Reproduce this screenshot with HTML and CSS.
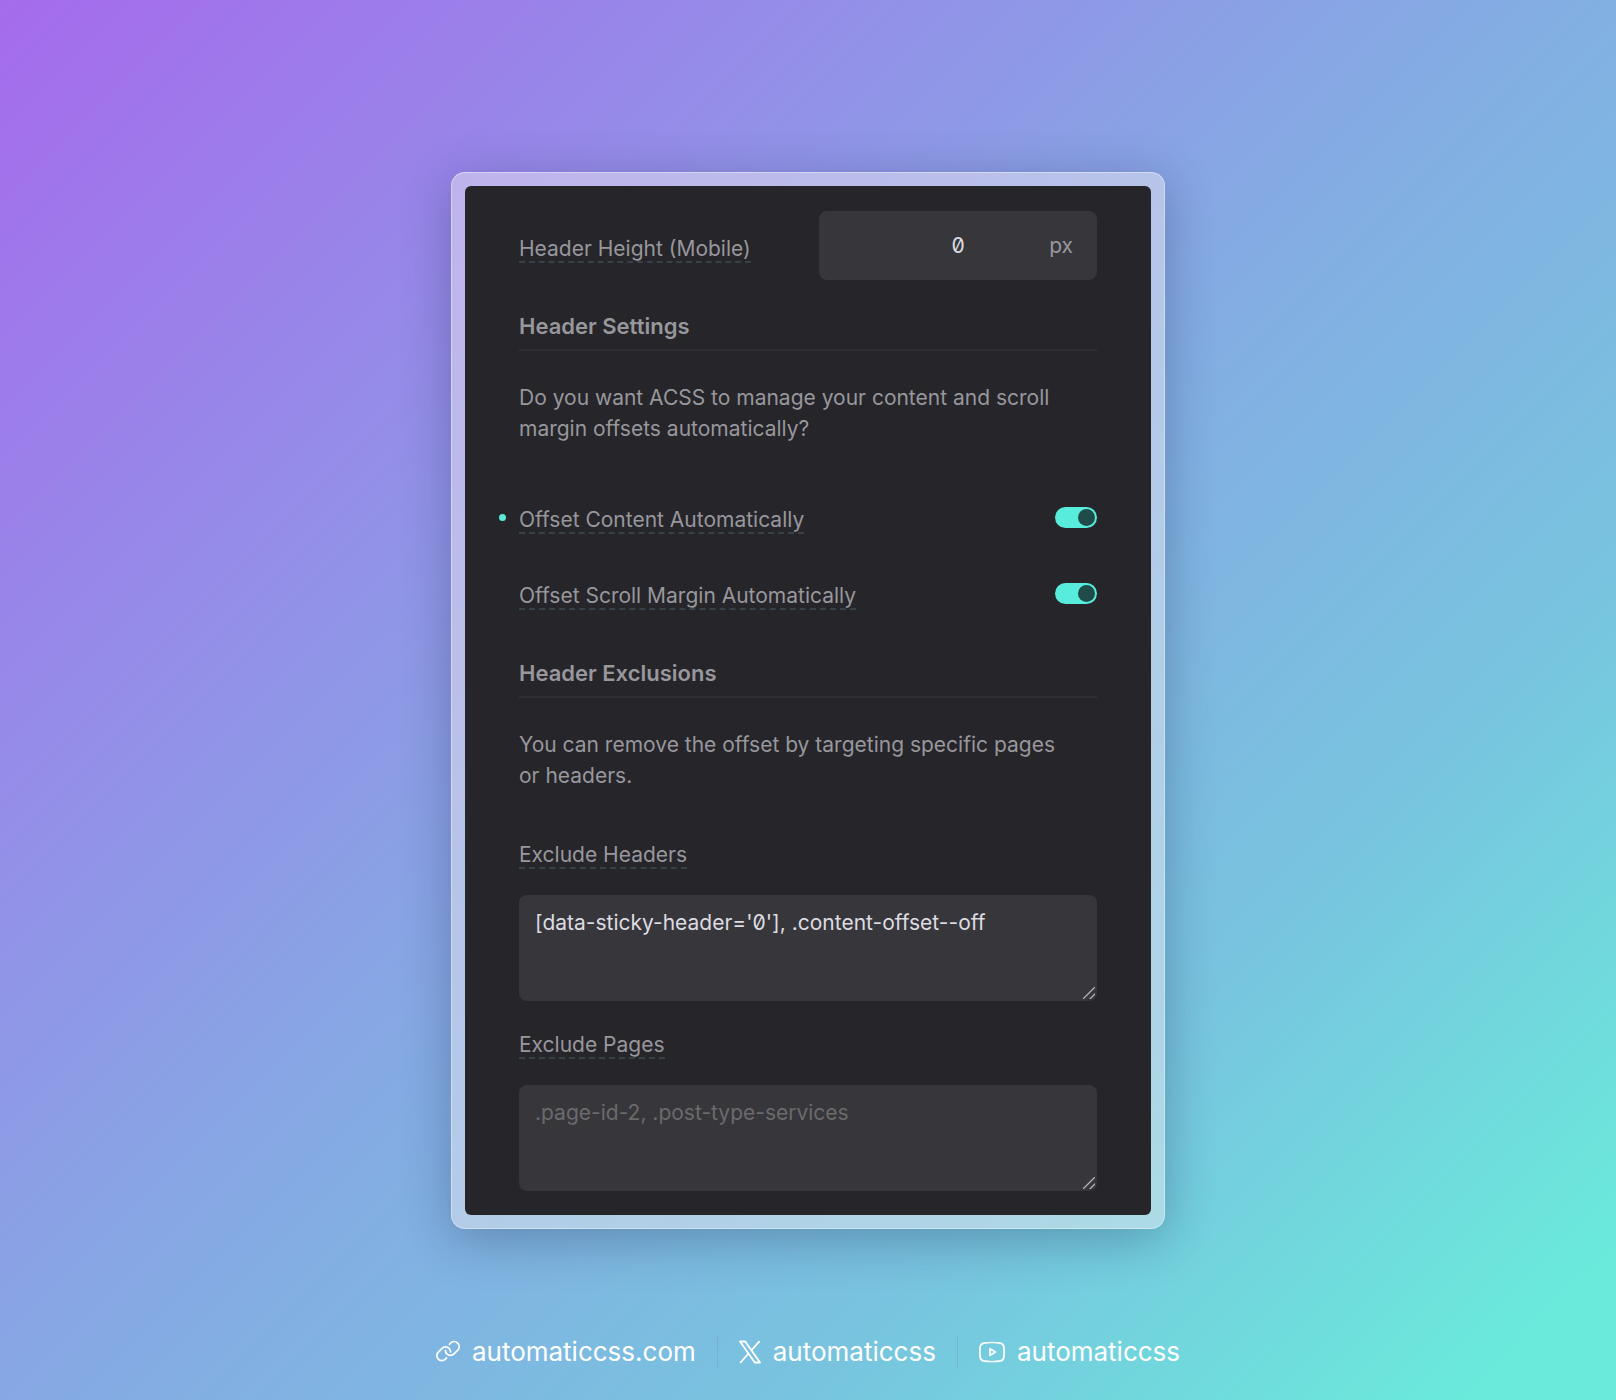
FILE: index.html
```html
<!DOCTYPE html>
<html lang="en">
<head>
    <meta charset="UTF-8">
    <meta name="viewport" content="width=device-width, initial-scale=1.0">
    <title>Automatic.css - Header Settings</title>
    <link rel="stylesheet" href="styles.css">
</head>
<body>
    <main class="frame">
        <form class="panel">
            <div class="row row-height">
                <label class="label" for="headerHeight">Header Height (Mobile)</label>
                <div class="unit-field">
                    <input type="text" id="headerHeight" value="0">
                    <span class="unit">px</span>
                </div>
            </div>

            <h2>Header Settings</h2>
            <p>Do you want ACSS to manage your content and scroll margin offsets automatically?</p>

            <div class="toggles">
                <div class="row changed">
                    <label class="label" for="offsetContent">Offset Content Automatically</label>
                    <input type="checkbox" class="toggle" id="offsetContent" checked>
                </div>
                <div class="row">
                    <label class="label" for="offsetScroll">Offset Scroll Margin Automatically</label>
                    <input type="checkbox" class="toggle" id="offsetScroll" checked>
                </div>
            </div>

            <h2>Header Exclusions</h2>
            <p>You can remove the offset by targeting specific pages or headers.</p>

            <div class="field">
                <label class="label" for="excludeHeaders">Exclude Headers</label>
                <textarea id="excludeHeaders" spellcheck="false">[data-sticky-header='0'], .content-offset--off</textarea>
            </div>
            <div class="field">
                <label class="label" for="excludePages">Exclude Pages</label>
                <textarea id="excludePages" placeholder=".page-id-2, .post-type-services"></textarea>
            </div>
        </form>
    </main>

    <footer class="links">
        <a href="#">
            <svg width="24" height="24" viewBox="16 24 224 224" fill="currentColor">
                <path d="M240,88.23a54.43,54.43,0,0,1-16,37L189.25,160a54.27,54.27,0,0,1-38.63,16h-.05A54.63,54.63,0,0,1,96,119.84a8,8,0,0,1,16,.45A38.62,38.62,0,0,0,150.58,160h0a38.39,38.39,0,0,0,27.31-11.31l34.75-34.75a38.63,38.63,0,0,0-54.63-54.63l-11,11A8,8,0,0,1,135.7,59l11-11A54.65,54.65,0,0,1,224,48,54.86,54.86,0,0,1,240,88.23ZM109,185.66l-11,11A38.41,38.41,0,0,1,70.6,208h0a38.63,38.63,0,0,1-27.29-65.94L78,107.31A38.63,38.63,0,0,1,144,135.71a8,8,0,0,0,16,.45A54.86,54.86,0,0,0,144,96a54.65,54.65,0,0,0-77.27,0L32,130.75A54.62,54.62,0,0,0,70.56,224h0a54.28,54.28,0,0,0,38.64-16l11-11A8,8,0,0,0,109,185.66Z"/>
            </svg>
            automaticcss.com
        </a>
        <a href="#">
            <svg width="22" height="24" viewBox="1 0 22 24" fill="none" stroke="currentColor" stroke-width="1.8" stroke-linejoin="round">
                <path d="M2 1.5h5.2l14.8 21h-5.2z"/>
                <path d="M21.6 1.2l-8.2 9.2M10.5 13.5L2.2 22.8"/>
            </svg>
            automaticcss
        </a>
        <a href="#">
            <svg width="26" height="24" viewBox="1 0 26 24" fill="none" stroke="currentColor" stroke-width="1.7" stroke-linejoin="round">
                <path d="M14 2.5c4 0 6.5.2 8.5.6 2.2.5 3.2 1.9 3.4 4.3.2 3 .2 6.2 0 9.2-.2 2.4-1.2 3.8-3.4 4.3-4 .8-13 .8-17 0-2.2-.5-3.2-1.9-3.4-4.3-.2-3-.2-6.2 0-9.2.2-2.4 1.2-3.800 3.4-4.300 2-.4 4.500-.6 8.500-.6z"/>
                <path d="M12 8.600v6.800l5.400-3.400z"/>
            </svg>
            automaticcss
        </a>
    </footer>
</body>
</html>
```

FILE: styles.css
```css
* {
    box-sizing: border-box;
}
body {
    margin: 0;
    min-height: 100vh;
    padding: 172px 24px 0;
    font-family: Inter, sans-serif;
    background: linear-gradient(135deg, #a56bec 0%, #9390e8 29%, #84ace3 50%, #78c4df 73%, #6aeadb 95%);
}
.frame {
    max-width: 714px;
    margin: 0 auto;
    padding: 13px;
    border: 1px solid rgba(255, 255, 255, 0.4);
    border-radius: 14px;
    background: rgba(240, 235, 240, 0.45);
    box-shadow: 0 10px 50px rgba(20, 30, 70, 0.3);
}
.panel {
    padding: 25px 54px 24px;
    border-radius: 6px;
    background: #26252a;
    color: #98979c;
    font-size: 21px;
    line-height: 31px;
}
.row {
    position: relative;
    display: flex;
    align-items: center;
    justify-content: space-between;
}
.label {
    line-height: 24px;
    border-bottom: 2px dashed #364047;
}
.row .label {
    padding-top: 8px;
}
.row-height {
    height: 69px;
}
.unit-field {
    display: flex;
    align-items: center;
    width: 278px;
    height: 100%;
    padding: 0 24px;
    border-radius: 8px;
    background: #37363b;
}
.unit-field input {
    flex: 1;
    min-width: 0;
    padding: 0 0 0 24px;
    border: 0;
    background: none;
    color: #dddce1;
    font: inherit;
    font-feature-settings: "zero";
    text-align: center;
}
h2 {
    margin: 31px 0;
    padding-bottom: 7px;
    border-bottom: 2px solid #302f34;
    font-size: 22px;
    font-weight: 600;
    line-height: 31px;
}
p {
    margin: 0 0 52px;
    padding-right: 24px;
}
.toggles {
    display: grid;
    gap: 42px;
    padding-top: 4px;
    margin-bottom: 48px;
}
.changed::before {
    content: "";
    position: absolute;
    left: -20px;
    width: 7px;
    height: 7px;
    border-radius: 50%;
    background: #5ce9d8;
}
.toggle {
    appearance: none;
    width: 42px;
    height: 21px;
    margin: 0;
    padding: 2px;
    border-radius: 11px;
    background: #58ecdc;
}
.toggle::before {
    content: "";
    display: block;
    width: 17px;
    height: 17px;
    border-radius: 50%;
    background: #1f4b48;
}
.toggle:checked::before {
    margin-left: auto;
}
.field {
    display: flex;
    flex-direction: column;
    align-items: flex-start;
    gap: 26px;
}
.field + .field {
    margin-top: 32px;
}
textarea {
    display: block;
    width: 100%;
    height: 106px;
    padding: 12px 16px;
    border: 0;
    border-radius: 8px;
    background: #37363b;
    color: #dddce1;
    font: inherit;
    font-feature-settings: "zero";
    resize: vertical;
}
textarea::placeholder {
    color: #6b6a6c;
}
textarea::-webkit-resizer {
    background: linear-gradient(135deg, transparent 45%, #b5b5b7 47%, #b5b5b7 53%, transparent 55%, transparent 74%, #b5b5b7 76%, #b5b5b7 82%, transparent 84%) no-repeat 1px 1px / 12px 12px;
}
.links {
    display: flex;
    flex-wrap: wrap;
    justify-content: center;
    margin-top: 107px;
    padding-bottom: 32px;
}
.links a {
    display: flex;
    align-items: center;
    gap: 12px;
    padding: 0 21px;
    color: #fff;
    font-size: 26px;
    line-height: 32px;
    text-decoration: none;
}
.links a + a {
    border-left: 1px solid rgba(120, 150, 180, 0.4);
}
```
